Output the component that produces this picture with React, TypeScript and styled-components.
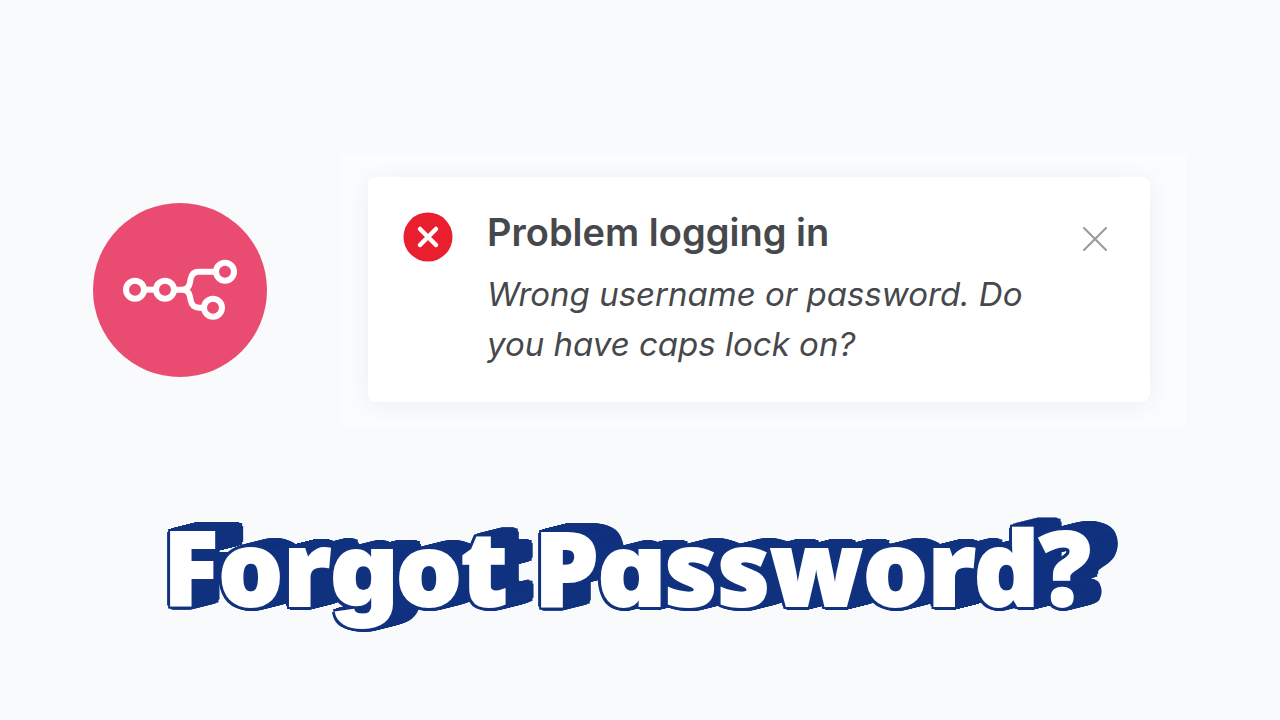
import React from "react";
import styled, { createGlobalStyle } from "styled-components";

const navy = "#11327f";
const DEPTH = 25;
const RISE = 6;

// Eight directions of a 4px outline with round corners.
const ring = [
  [4, 0], [3, 3], [0, 4], [-3, 3],
  [-4, 0], [-3, -3], [0, -4], [3, -3],
];

// The outline is repeated up and to the right to give the title its solid side.
const extrusion = Array.from({ length: DEPTH + 1 }, (_, x) => {
  const y = -(x * RISE) / DEPTH;
  return ring.map(([dx, dy]) => `${x + dx}px ${y + dy}px 0 ${navy}`).join(", ");
}).join(", ");

const Global = createGlobalStyle`
  * { box-sizing: border-box; }
  body {
    margin: 0;
    background: #f8fafc;
    font-family: Inter, "Liberation Sans", sans-serif;
  }
`;

const Page = styled.main`
  min-height: 100vh;
  display: flex;
  flex-direction: column;
  gap: 90px;
  padding: 154px 94px 40px 93px;
`;

const Hero = styled.section`
  display: flex;
  align-items: center;
  gap: 73px;
`;

const Logo = styled.svg`
  flex: none;
  width: 174px;
  height: 174px;
`;

const Frame = styled.div`
  flex: 1;
  min-width: 0;
  padding: 23px 36px 24px 28px;
  background: #fbfcfd;
  overflow: hidden;
`;

const Toast = styled.div`
  display: flex;
  align-items: flex-start;
  padding: 30px 42px 33px 35px;
  border-radius: 8px;
  background: #ffffff;
  color: #46484b;
  box-shadow: 0 3px 24px rgba(40, 50, 70, 0.07);
`;

const ErrorIcon = styled.svg`
  flex: none;
  width: 50px;
  height: 50px;
  margin-top: 5px;
`;

const Message = styled.div`
  flex: 1;
  min-width: 0;
  display: flex;
  flex-direction: column;
  gap: 12px;
  margin: 0 24px 0 34px;
`;

const MessageTitle = styled.h2`
  margin: 0;
  font-size: 38px;
  font-weight: 600;
  line-height: 50px;
`;

const MessageText = styled.p`
  margin: 0;
  font-size: 33px;
  font-style: italic;
  font-weight: 400;
  line-height: 50px;
`;

const CloseButton = styled.button`
  flex: none;
  display: flex;
  margin: 19px 0 0;
  padding: 0;
  border: 0;
  background: none;
  color: #98999c;
  cursor: pointer;
`;

const Title = styled.h1`
  margin: 0;
  padding-right: ${DEPTH}px;
  text-align: center;
  color: #ffffff;
  font-family: "Noto Sans", "Open Sans", sans-serif;
  font-size: 102px;
  font-weight: 900;
  line-height: 102px;
  -webkit-text-stroke: 2px #ffffff;
  text-shadow: ${extrusion};
`;

const RoundLetter = styled.span`
  font-family: Inter, sans-serif;
  font-feature-settings: "cv11";
`;

export default function App() {
  return (
    <>
      <Global />
      <Page>
        <Hero>
          <Logo viewBox="39 39 522 522" role="img" aria-label="Workflow logo">
            <circle cx="300" cy="300" r="261" fill="#ea4b71" />
            <g fill="none" stroke="#ffffff" strokeWidth="18">
              <circle cx="165" cy="299" r="27" />
              <circle cx="255" cy="299" r="27" />
              <circle cx="435" cy="245" r="27" />
              <circle cx="399" cy="353" r="27" />
              <path d="M192 299H228" />
              <path d="M282 299H306C322 299 328 290 330 277L332 266C335 251 344 245 357 245H408" />
              <path d="M306 299C322 299 328 308 330 320L332 331C335 347 344 353 357 353H372" />
            </g>
          </Logo>
          <Frame>
            <Toast role="alert">
              <ErrorIcon viewBox="0 0 50 50" aria-hidden="true">
                <circle cx="25" cy="25" r="24.5" fill="#e91f30" />
                <path
                  d="M17 17L33 33M33 17L17 33"
                  stroke="#ffffff"
                  strokeWidth="4.5"
                  strokeLinecap="round"
                />
              </ErrorIcon>
              <Message>
                <MessageTitle>Problem logging in</MessageTitle>
                <MessageText>
                  Wrong username or password. Do you have caps lock on?
                </MessageText>
              </Message>
              <CloseButton type="button" aria-label="Close">
                <svg width="26" height="26" viewBox="0 0 26 26">
                  <path
                    d="M2 2L24 24M24 2L2 24"
                    stroke="currentColor"
                    strokeWidth="2"
                    strokeLinecap="round"
                  />
                </svg>
              </CloseButton>
            </Toast>
          </Frame>
        </Hero>
        <Title>
          For<RoundLetter>go</RoundLetter>t P<RoundLetter>a</RoundLetter>ssword?
        </Title>
      </Page>
    </>
  );
}
